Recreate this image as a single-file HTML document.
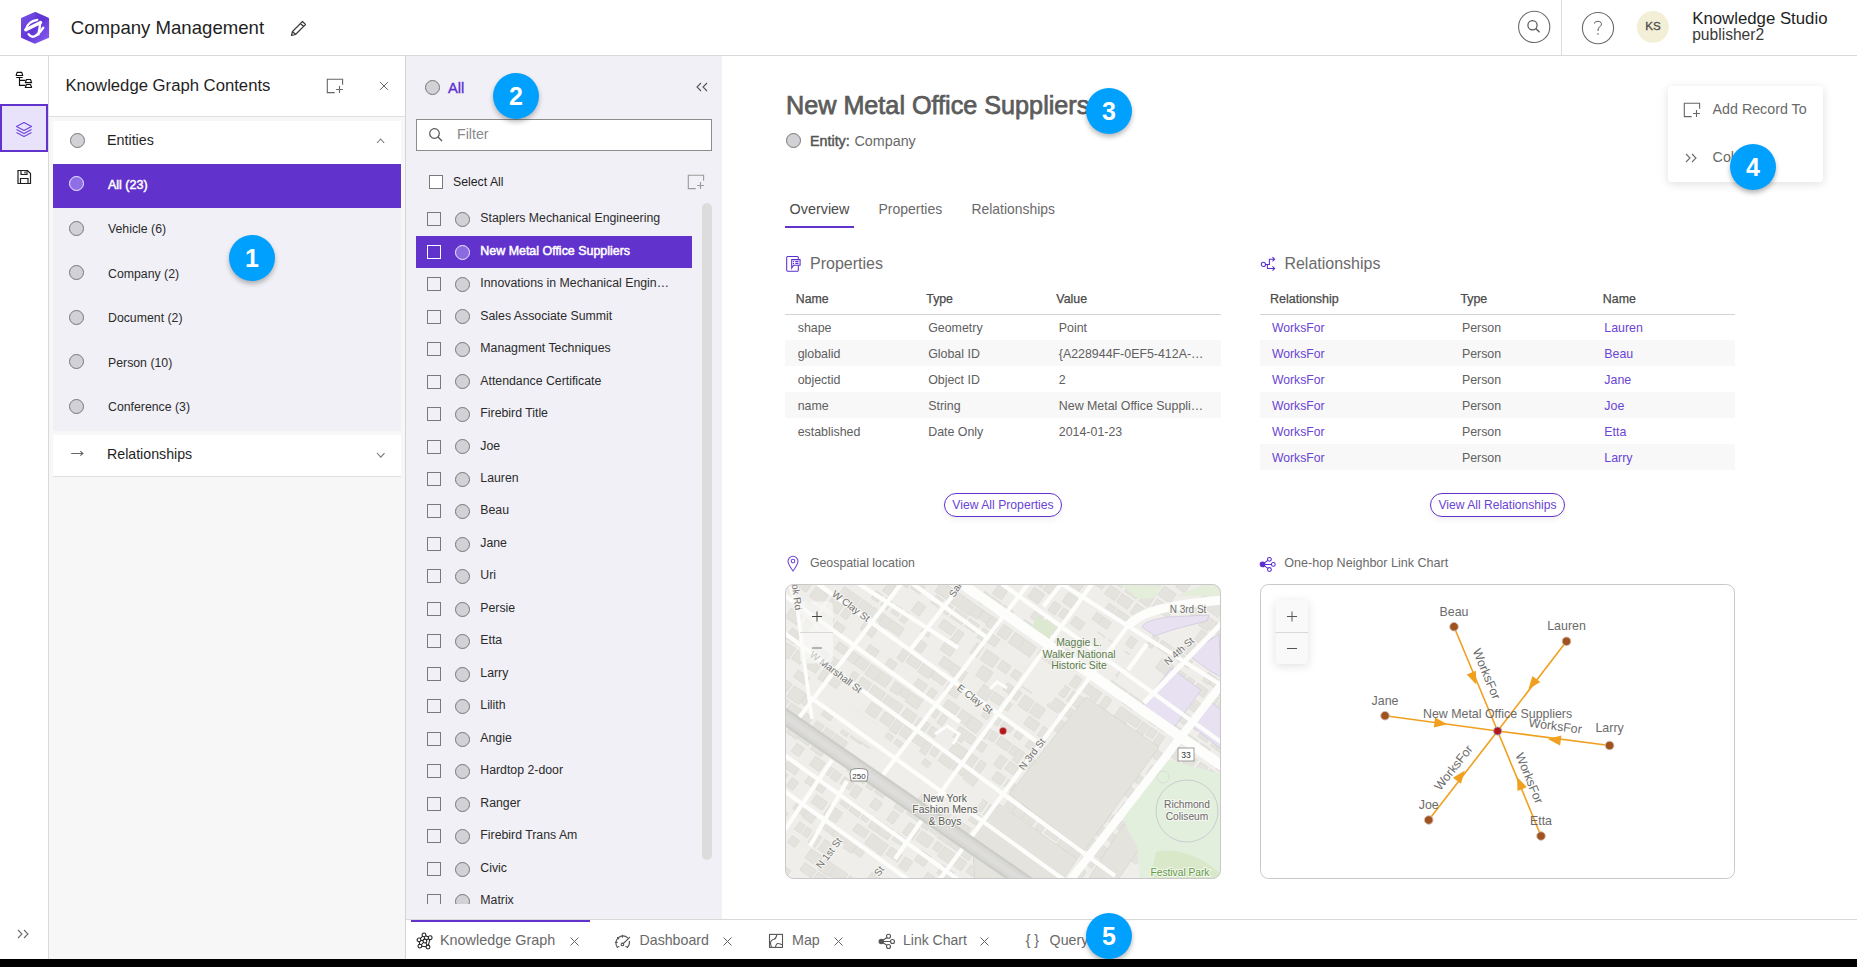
<!DOCTYPE html>
<html><head><meta charset="utf-8"><title>Knowledge Studio</title><style>*{margin:0;padding:0}
html,body{width:1857px;height:967px;overflow:hidden;background:#fff}
body{position:relative;font-family:"Liberation Sans",sans-serif}
.t{position:absolute;white-space:nowrap}
.b{position:absolute;display:block}
.badge{position:absolute;width:46px;height:46px;border-radius:50%;background:#00a0ff;color:#fff;font-weight:bold;font-size:25px;line-height:46px;text-align:center;box-shadow:0 3px 5px rgba(0,0,0,0.28)}
</style></head><body>
<div class="b" style="left:0px;top:0px;width:1857px;height:55px;background:#fff"></div>
<div class="b" style="left:0px;top:55px;width:1857px;height:1px;background:#d9d9d9"></div>
<svg class="b" style="left:20px;top:11px;" width="30" height="34" viewBox="0 0 30 34"><defs><linearGradient id="lg" x1="0" y1="0" x2="1" y2="1"><stop offset="0" stop-color="#7b55e6"/><stop offset="0.5" stop-color="#6236d6"/><stop offset="1" stop-color="#8c62f2"/></linearGradient></defs>
<path d="M14.8 1 Q15 0.8 15.5 1.1 L28.4 6.7 Q29.1 7 29.1 7.8 L29.1 26 Q29.1 26.8 28.4 27.1 L15.5 32.5 Q14.9 32.8 14.2 32.5 L1.7 27.1 Q1 26.8 1 26 L1 7.8 Q1 7 1.7 6.7 Z" fill="url(#lg)"/>
<path d="M15 1 L15 17 L29 7.5 L29 7 L15.5 1.1 Z" fill="#5a30cc" opacity="0.35"/>
<g stroke="#fff" fill="none" stroke-linecap="round"><path d="M5.8 18.6 Q7.5 10.5 17.3 8.8" stroke-width="2.2"/><path d="M5.8 18.8 L20.6 11.4" stroke-width="3.4"/><path d="M20.2 11.6 Q19.8 17 18.4 23.4" stroke-width="2.4"/><path d="M8.6 23.2 Q13.5 30.5 23.2 16.8" stroke-width="2.4"/></g></svg>
<div class="t " style="left:70.80px;top:19.45px;font-size:18.60px;line-height:18.60px;color:#1f1f1f;">Company Management</div>
<svg class="b" style="left:288px;top:19px;" width="20" height="19" viewBox="0 0 20 19"><path d="M3.5 16.5 L4.5 12.5 L14.5 2.5 L17.5 5.5 L7.5 15.5 Z M12.5 4.5 L15.5 7.5 M4.5 12.5 L7.5 15.5" stroke="#3a3a3a" stroke-width="1.2" fill="none" stroke-linejoin="round"/></svg>
<svg class="b" style="left:1517px;top:10px;" width="35" height="35" viewBox="0 0 35 35"><circle cx="17.2" cy="16.9" r="15.6" fill="none" stroke="#6b6b6b" stroke-width="1.1"/><circle cx="15.5" cy="15.2" r="4.6" fill="none" stroke="#555" stroke-width="1.2"/><path d="M18.8 18.5 L22.5 22.2" stroke="#555" stroke-width="1.3"/></svg>
<div class="b" style="left:1561px;top:0px;width:1px;height:55px;background:#dcdcdc"></div>
<svg class="b" style="left:1581px;top:11px;" width="35" height="35" viewBox="0 0 35 35"><circle cx="17" cy="17.1" r="15.6" fill="none" stroke="#6b6b6b" stroke-width="1.1"/></svg>
<svg class="b" style="left:1590px;top:18px;" width="16" height="20" viewBox="0 0 16 20"><path d="M4.5 5.5 C4.5 2.5 11.5 2.5 11.5 6 C11.5 8.5 8 9 8 12 V13" fill="none" stroke="#555" stroke-width="1"/><circle cx="8" cy="16" r="0.8" fill="#555"/></svg>
<svg class="b" style="left:1636px;top:10px;" width="34" height="34" viewBox="0 0 34 34"><circle cx="16.9" cy="16.9" r="15.9" fill="#f2efd6"/></svg>
<div class="t" style="left:1353.00px;width:600px;text-align:center;top:20.38px;font-size:11.60px;line-height:11.60px;color:#4a4a4a;-webkit-text-stroke:0.3px #4a4a4a;">KS</div>
<div class="t " style="left:1692.20px;top:11.28px;font-size:16.80px;line-height:16.80px;color:#1f1f1f;">Knowledge Studio</div>
<div class="t " style="left:1692.20px;top:26.69px;font-size:15.60px;line-height:15.60px;color:#3a3a3a;">publisher2</div>
<div class="b" style="left:0px;top:56px;width:48px;height:903px;background:#fff"></div>
<div class="b" style="left:48px;top:56px;width:1px;height:903px;background:#d9d9d9"></div>
<svg class="b" style="left:14px;top:70px;" width="20" height="20" viewBox="0 0 20 20"><g fill="none" stroke="#111" stroke-width="1.15" stroke-linejoin="round"><path d="M3.1 2.3 H7.8 L8.7 5.5 H2.2 Z"/><path d="M2.2 7.5 H8.7 M5.5 7.5 V15.4 H11.5 M5.5 10.4 H11.5"/><path d="M12.5 9.5 H16.5 L17.6 12.6 H11.3 Z"/><path d="M12.5 14.5 H16.5 L17.6 17.5 H11.3 Z"/></g></svg>
<div class="b" style="left:0px;top:104px;width:48px;height:48px;background:#e8e2fb;border:2px solid #6232cd;box-sizing:border-box"></div>
<svg class="b" style="left:14px;top:120.5px;" width="20" height="18" viewBox="0 0 20 18"><g fill="none" stroke="#6a44d6" stroke-width="1.1" stroke-linejoin="round"><path d="M10 1.5 L17.5 5.5 L10 9.5 L2.5 5.5 Z"/><path d="M2.5 8.5 L10 12.5 L17.5 8.5"/><path d="M2.5 11.5 L10 15.5 L17.5 11.5"/></g></svg>
<svg class="b" style="left:14.5px;top:167.5px;" width="18" height="18" viewBox="0 0 18 18"><g fill="none" stroke="#1e1e1e" stroke-width="1.2"><path d="M3 2.5 H12.5 L15.5 5.5 V15.5 H3 Z"/><path d="M6 2.5 V6.5 H12 V2.5 M10 3.5 V5.5"/><path d="M5.5 15.5 V10.5 H13 V15.5"/></g></svg>
<svg class="b" style="left:15px;top:927px;" width="16" height="14" viewBox="0 0 16 14"><path d="M3 3 L7 7 L3 11 M9 3 L13 7 L9 11" fill="none" stroke="#6b6b6b" stroke-width="1.1"/></svg>
<div class="b" style="left:49px;top:56px;width:356px;height:903px;background:#f7f7f7"></div>
<div class="b" style="left:49px;top:56px;width:356px;height:60px;background:#fff"></div>
<div class="b" style="left:49px;top:116px;width:356px;height:1px;background:#dedede"></div>
<div class="b" style="left:405px;top:56px;width:1px;height:903px;background:#d4d4d4"></div>
<div class="t " style="left:65.40px;top:78.36px;font-size:16.70px;line-height:16.70px;color:#1f1f1f;">Knowledge Graph Contents</div>
<svg class="b" style="left:325px;top:77px;" width="20" height="18" viewBox="0 0 20 18"><g fill="none" stroke="#666" stroke-width="1.1"><path d="M9.7 15.6 H2.3 V2.3 H17.6 V7.7"/><path d="M11.1 12.5 H17.9 M14.5 9.1 V15.9"/></g></svg>
<svg class="b" style="left:377px;top:80px;" width="13" height="13" viewBox="0 0 13 13"><path d="M3.1 2.1 L10.9 9.8 M10.9 2.1 L3.1 9.8" stroke="#666" stroke-width="1"/></svg>
<div class="b" style="left:53px;top:121px;width:348px;height:43px;background:#fff"></div>
<svg class="b" style="left:69.00px;top:131.80px" width="17" height="17"><circle cx="8.5" cy="8.5" r="7.0" fill="#d2d1d6" stroke="#777" stroke-width="1"/></svg>
<div class="t " style="left:107.00px;top:132.89px;font-size:14.30px;line-height:14.30px;color:#1f1f1f;">Entities</div>
<svg class="b" style="left:374.4px;top:136.4px;" width="14" height="10" viewBox="0 0 14 10"><path d="M3 7 L6.6 3 L10.2 7" fill="none" stroke="#777" stroke-width="1.1"/></svg>
<div class="b" style="left:53px;top:164px;width:348px;height:44px;background:#6232cd"></div>
<svg class="b" style="left:68.00px;top:174.80px" width="17" height="17"><circle cx="8.5" cy="8.5" r="7.0" fill="#8f6ee6" stroke="#f0ecff" stroke-width="1"/></svg>
<div class="t " style="left:108.00px;top:178.62px;font-size:12.50px;line-height:12.50px;color:#fff;-webkit-text-stroke:0.5px #fff;">All (23)</div>
<div class="b" style="left:53px;top:208px;width:348px;height:223px;background:#f1f0f6"></div>
<svg class="b" style="left:67.80px;top:220.00px" width="17" height="17"><circle cx="8.5" cy="8.5" r="7.0" fill="#d2d1d6" stroke="#777" stroke-width="1"/></svg>
<div class="t " style="left:108.00px;top:223.09px;font-size:12.30px;line-height:12.30px;color:#2b2b2b;">Vehicle (6)</div>
<svg class="b" style="left:67.80px;top:264.10px" width="17" height="17"><circle cx="8.5" cy="8.5" r="7.0" fill="#d2d1d6" stroke="#777" stroke-width="1"/></svg>
<div class="t " style="left:108.00px;top:268.09px;font-size:12.30px;line-height:12.30px;color:#2b2b2b;">Company (2)</div>
<svg class="b" style="left:67.80px;top:308.70px" width="17" height="17"><circle cx="8.5" cy="8.5" r="7.0" fill="#d2d1d6" stroke="#777" stroke-width="1"/></svg>
<div class="t " style="left:108.00px;top:312.09px;font-size:12.30px;line-height:12.30px;color:#2b2b2b;">Document (2)</div>
<svg class="b" style="left:67.80px;top:353.10px" width="17" height="17"><circle cx="8.5" cy="8.5" r="7.0" fill="#d2d1d6" stroke="#777" stroke-width="1"/></svg>
<div class="t " style="left:108.00px;top:357.09px;font-size:12.30px;line-height:12.30px;color:#2b2b2b;">Person (10)</div>
<svg class="b" style="left:67.80px;top:397.80px" width="17" height="17"><circle cx="8.5" cy="8.5" r="7.0" fill="#d2d1d6" stroke="#777" stroke-width="1"/></svg>
<div class="t " style="left:108.00px;top:401.09px;font-size:12.30px;line-height:12.30px;color:#2b2b2b;">Conference (3)</div>
<div class="b" style="left:53px;top:435px;width:348px;height:41px;background:#fff"></div>
<div class="b" style="left:53px;top:476px;width:348px;height:1px;background:#dedede"></div>
<svg class="b" style="left:68px;top:447px;" width="18" height="12" viewBox="0 0 18 12"><path d="M3.2 6.5 H15 M12.3 4.2 L15 6.5 L12.3 8.7" fill="none" stroke="#666" stroke-width="1.05"/></svg>
<div class="t " style="left:107.00px;top:446.98px;font-size:14.20px;line-height:14.20px;color:#1f1f1f;">Relationships</div>
<svg class="b" style="left:374.2px;top:450.2px;" width="14" height="10" viewBox="0 0 14 10"><path d="M3 3 L6.8 7.2 L10.5 3.2" fill="none" stroke="#777" stroke-width="1.1"/></svg>
<div class="b" style="left:406px;top:56px;width:316px;height:863px;background:#f1f0f6"></div>
<svg class="b" style="left:424.00px;top:79.00px" width="17" height="17"><circle cx="8.5" cy="8.5" r="7.0" fill="#d2d1d6" stroke="#777" stroke-width="1"/></svg>
<div class="t " style="left:448.00px;top:81.15px;font-size:14.70px;line-height:14.70px;color:#5a2fd0;-webkit-text-stroke:0.35px #5a2fd0;">All</div>
<svg class="b" style="left:693px;top:80px;" width="18" height="14" viewBox="0 0 18 14"><path d="M8 3 L4 7 L8 11 M14 3 L10 7 L14 11" fill="none" stroke="#555" stroke-width="1.1"/></svg>
<div class="b" style="left:416px;top:119px;width:296px;height:32px;background:#fff;border:1px solid #8c8c8c;box-sizing:border-box"></div>
<svg class="b" style="left:427px;top:126px;" width="18" height="18" viewBox="0 0 18 18"><circle cx="7.5" cy="7.5" r="4.8" fill="none" stroke="#555" stroke-width="1.2"/><path d="M11 11 L15 15" stroke="#555" stroke-width="1.3"/></svg>
<div class="t " style="left:457.00px;top:127.18px;font-size:14.20px;line-height:14.20px;color:#8a8a8a;">Filter</div>
<div class="b" style="left:429px;top:175px;width:14px;height:14px;background:#fff;border:1px solid #7a7a7a;box-sizing:border-box"></div>
<div class="t " style="left:453.00px;top:175.89px;font-size:12.30px;line-height:12.30px;color:#1f1f1f;">Select All</div>
<svg class="b" style="left:685.7px;top:173.2px;" width="20" height="18" viewBox="0 0 20 18"><g fill="none" stroke="#9a9a9a" stroke-width="1.1"><path d="M9.7 15.6 H2.3 V2.3 H17.6 V7.7"/><path d="M11.1 12.5 H17.9 M14.5 9.1 V15.9"/></g></svg>
<div class="b" style="left:702px;top:203px;width:10px;height:657px;background:#dcdcdc;border-radius:5px"></div>
<div class="b" style="left:0;top:0;width:1857px;height:904px;overflow:hidden"><div class="b" style="left:427px;top:212px;width:14px;height:14px;border:1px solid #7a7a7a;box-sizing:border-box"></div>
<svg class="b" style="left:453.50px;top:210.70px" width="17" height="17"><circle cx="8.5" cy="8.5" r="7.0" fill="#d2d1d6" stroke="#777" stroke-width="1"/></svg>
<div class="t " style="left:480.30px;top:212.19px;font-size:12.30px;line-height:12.30px;color:#2b2b2b;">Staplers Mechanical Engineering</div>
<div class="b" style="left:416px;top:236px;width:276px;height:32px;background:#6232cd"></div>
<div class="b" style="left:427px;top:245px;width:14px;height:14px;border:1.2px solid #fff;box-sizing:border-box;background:#6232cd"></div>
<svg class="b" style="left:453.50px;top:243.81px" width="17" height="17"><circle cx="8.5" cy="8.5" r="7.0" fill="#8c6ae0" stroke="#f0ecff" stroke-width="1"/></svg>
<div class="t " style="left:480.30px;top:245.23px;font-size:12.45px;line-height:12.45px;color:#fff;-webkit-text-stroke:0.5px #fff;">New Metal Office Suppliers</div>
<div class="b" style="left:427px;top:277px;width:14px;height:14px;border:1px solid #7a7a7a;box-sizing:border-box"></div>
<svg class="b" style="left:453.50px;top:275.72px" width="17" height="17"><circle cx="8.5" cy="8.5" r="7.0" fill="#d2d1d6" stroke="#777" stroke-width="1"/></svg>
<div class="t " style="left:480.30px;top:277.14px;font-size:12.30px;line-height:12.30px;color:#2b2b2b;">Innovations in Mechanical Engin…</div>
<div class="b" style="left:427px;top:310px;width:14px;height:14px;border:1px solid #7a7a7a;box-sizing:border-box"></div>
<svg class="b" style="left:453.50px;top:308.23px" width="17" height="17"><circle cx="8.5" cy="8.5" r="7.0" fill="#d2d1d6" stroke="#777" stroke-width="1"/></svg>
<div class="t " style="left:480.30px;top:309.61px;font-size:12.30px;line-height:12.30px;color:#2b2b2b;">Sales Associate Summit</div>
<div class="b" style="left:427px;top:342px;width:14px;height:14px;border:1px solid #7a7a7a;box-sizing:border-box"></div>
<svg class="b" style="left:453.50px;top:340.74px" width="17" height="17"><circle cx="8.5" cy="8.5" r="7.0" fill="#d2d1d6" stroke="#777" stroke-width="1"/></svg>
<div class="t " style="left:480.30px;top:342.09px;font-size:12.30px;line-height:12.30px;color:#2b2b2b;">Managment Techniques</div>
<div class="b" style="left:427px;top:375px;width:14px;height:14px;border:1px solid #7a7a7a;box-sizing:border-box"></div>
<svg class="b" style="left:453.50px;top:373.25px" width="17" height="17"><circle cx="8.5" cy="8.5" r="7.0" fill="#d2d1d6" stroke="#777" stroke-width="1"/></svg>
<div class="t " style="left:480.30px;top:374.57px;font-size:12.30px;line-height:12.30px;color:#2b2b2b;">Attendance Certificate</div>
<div class="b" style="left:427px;top:407px;width:14px;height:14px;border:1px solid #7a7a7a;box-sizing:border-box"></div>
<svg class="b" style="left:453.50px;top:405.76px" width="17" height="17"><circle cx="8.5" cy="8.5" r="7.0" fill="#d2d1d6" stroke="#777" stroke-width="1"/></svg>
<div class="t " style="left:480.30px;top:407.04px;font-size:12.30px;line-height:12.30px;color:#2b2b2b;">Firebird Title</div>
<div class="b" style="left:427px;top:440px;width:14px;height:14px;border:1px solid #7a7a7a;box-sizing:border-box"></div>
<svg class="b" style="left:453.50px;top:438.27px" width="17" height="17"><circle cx="8.5" cy="8.5" r="7.0" fill="#d2d1d6" stroke="#777" stroke-width="1"/></svg>
<div class="t " style="left:480.30px;top:439.52px;font-size:12.30px;line-height:12.30px;color:#2b2b2b;">Joe</div>
<div class="b" style="left:427px;top:472px;width:14px;height:14px;border:1px solid #7a7a7a;box-sizing:border-box"></div>
<svg class="b" style="left:453.50px;top:470.78px" width="17" height="17"><circle cx="8.5" cy="8.5" r="7.0" fill="#d2d1d6" stroke="#777" stroke-width="1"/></svg>
<div class="t " style="left:480.30px;top:471.99px;font-size:12.30px;line-height:12.30px;color:#2b2b2b;">Lauren</div>
<div class="b" style="left:427px;top:504px;width:14px;height:14px;border:1px solid #7a7a7a;box-sizing:border-box"></div>
<svg class="b" style="left:453.50px;top:503.29px" width="17" height="17"><circle cx="8.5" cy="8.5" r="7.0" fill="#d2d1d6" stroke="#777" stroke-width="1"/></svg>
<div class="t " style="left:480.30px;top:504.47px;font-size:12.30px;line-height:12.30px;color:#2b2b2b;">Beau</div>
<div class="b" style="left:427px;top:537px;width:14px;height:14px;border:1px solid #7a7a7a;box-sizing:border-box"></div>
<svg class="b" style="left:453.50px;top:535.80px" width="17" height="17"><circle cx="8.5" cy="8.5" r="7.0" fill="#d2d1d6" stroke="#777" stroke-width="1"/></svg>
<div class="t " style="left:480.30px;top:536.95px;font-size:12.30px;line-height:12.30px;color:#2b2b2b;">Jane</div>
<div class="b" style="left:427px;top:569px;width:14px;height:14px;border:1px solid #7a7a7a;box-sizing:border-box"></div>
<svg class="b" style="left:453.50px;top:568.31px" width="17" height="17"><circle cx="8.5" cy="8.5" r="7.0" fill="#d2d1d6" stroke="#777" stroke-width="1"/></svg>
<div class="t " style="left:480.30px;top:569.42px;font-size:12.30px;line-height:12.30px;color:#2b2b2b;">Uri</div>
<div class="b" style="left:427px;top:602px;width:14px;height:14px;border:1px solid #7a7a7a;box-sizing:border-box"></div>
<svg class="b" style="left:453.50px;top:600.82px" width="17" height="17"><circle cx="8.5" cy="8.5" r="7.0" fill="#d2d1d6" stroke="#777" stroke-width="1"/></svg>
<div class="t " style="left:480.30px;top:601.90px;font-size:12.30px;line-height:12.30px;color:#2b2b2b;">Persie</div>
<div class="b" style="left:427px;top:634px;width:14px;height:14px;border:1px solid #7a7a7a;box-sizing:border-box"></div>
<svg class="b" style="left:453.50px;top:633.33px" width="17" height="17"><circle cx="8.5" cy="8.5" r="7.0" fill="#d2d1d6" stroke="#777" stroke-width="1"/></svg>
<div class="t " style="left:480.30px;top:634.37px;font-size:12.30px;line-height:12.30px;color:#2b2b2b;">Etta</div>
<div class="b" style="left:427px;top:667px;width:14px;height:14px;border:1px solid #7a7a7a;box-sizing:border-box"></div>
<svg class="b" style="left:453.50px;top:665.84px" width="17" height="17"><circle cx="8.5" cy="8.5" r="7.0" fill="#d2d1d6" stroke="#777" stroke-width="1"/></svg>
<div class="t " style="left:480.30px;top:666.85px;font-size:12.30px;line-height:12.30px;color:#2b2b2b;">Larry</div>
<div class="b" style="left:427px;top:699px;width:14px;height:14px;border:1px solid #7a7a7a;box-sizing:border-box"></div>
<svg class="b" style="left:453.50px;top:698.35px" width="17" height="17"><circle cx="8.5" cy="8.5" r="7.0" fill="#d2d1d6" stroke="#777" stroke-width="1"/></svg>
<div class="t " style="left:480.30px;top:699.33px;font-size:12.30px;line-height:12.30px;color:#2b2b2b;">Lilith</div>
<div class="b" style="left:427px;top:732px;width:14px;height:14px;border:1px solid #7a7a7a;box-sizing:border-box"></div>
<svg class="b" style="left:453.50px;top:730.86px" width="17" height="17"><circle cx="8.5" cy="8.5" r="7.0" fill="#d2d1d6" stroke="#777" stroke-width="1"/></svg>
<div class="t " style="left:480.30px;top:731.80px;font-size:12.30px;line-height:12.30px;color:#2b2b2b;">Angie</div>
<div class="b" style="left:427px;top:764px;width:14px;height:14px;border:1px solid #7a7a7a;box-sizing:border-box"></div>
<svg class="b" style="left:453.50px;top:763.37px" width="17" height="17"><circle cx="8.5" cy="8.5" r="7.0" fill="#d2d1d6" stroke="#777" stroke-width="1"/></svg>
<div class="t " style="left:480.30px;top:764.28px;font-size:12.30px;line-height:12.30px;color:#2b2b2b;">Hardtop 2-door</div>
<div class="b" style="left:427px;top:797px;width:14px;height:14px;border:1px solid #7a7a7a;box-sizing:border-box"></div>
<svg class="b" style="left:453.50px;top:795.88px" width="17" height="17"><circle cx="8.5" cy="8.5" r="7.0" fill="#d2d1d6" stroke="#777" stroke-width="1"/></svg>
<div class="t " style="left:480.30px;top:796.75px;font-size:12.30px;line-height:12.30px;color:#2b2b2b;">Ranger</div>
<div class="b" style="left:427px;top:829px;width:14px;height:14px;border:1px solid #7a7a7a;box-sizing:border-box"></div>
<svg class="b" style="left:453.50px;top:828.39px" width="17" height="17"><circle cx="8.5" cy="8.5" r="7.0" fill="#d2d1d6" stroke="#777" stroke-width="1"/></svg>
<div class="t " style="left:480.30px;top:829.23px;font-size:12.30px;line-height:12.30px;color:#2b2b2b;">Firebird Trans Am</div>
<div class="b" style="left:427px;top:862px;width:14px;height:14px;border:1px solid #7a7a7a;box-sizing:border-box"></div>
<svg class="b" style="left:453.50px;top:860.90px" width="17" height="17"><circle cx="8.5" cy="8.5" r="7.0" fill="#d2d1d6" stroke="#777" stroke-width="1"/></svg>
<div class="t " style="left:480.30px;top:861.71px;font-size:12.30px;line-height:12.30px;color:#2b2b2b;">Civic</div>
<div class="b" style="left:427px;top:894px;width:14px;height:14px;border:1px solid #7a7a7a;box-sizing:border-box"></div>
<svg class="b" style="left:453.50px;top:893.41px" width="17" height="17"><circle cx="8.5" cy="8.5" r="7.0" fill="#d2d1d6" stroke="#777" stroke-width="1"/></svg>
<div class="t " style="left:480.30px;top:894.18px;font-size:12.30px;line-height:12.30px;color:#2b2b2b;">Matrix</div>
</div>
<div class="b" style="left:406px;top:919px;width:1451px;height:40px;background:#fff"></div>
<div class="b" style="left:406px;top:919px;width:1451px;height:1px;background:#d9d9d9"></div>
<div class="b" style="left:411px;top:920px;width:179px;height:2px;background:#6232cd"></div>
<div class="b" style="left:0px;top:959px;width:1857px;height:8px;background:#000"></div>
<svg class="b" style="left:416px;top:932px;" width="18" height="18" viewBox="0 0 18 18"><g fill="none" stroke="#1e1e1e" stroke-width="1.05"><path d="M8 2.9 L14.2 5.7 M8 2.9 L3 7.9 M3 7.9 L3.9 14.1 M3.9 14.1 L12 15 M12 15 L14.2 5.7 M8.9 9 L8 2.9 M8.9 9 L14.2 5.7 M8.9 9 L3 7.9 M8.9 9 L3.9 14.1 M8.9 9 L12 15"/><circle cx="8" cy="2.9" r="1.9" fill="#fff"/><circle cx="14.2" cy="5.7" r="1.9" fill="#fff"/><circle cx="3" cy="7.9" r="1.9" fill="#fff"/><circle cx="3.9" cy="14.1" r="1.9" fill="#fff"/><circle cx="12" cy="15" r="1.9" fill="#fff"/><circle cx="8.9" cy="9" r="1.9" fill="#fff"/></g></svg>
<div class="t " style="left:440.00px;top:933.01px;font-size:14.40px;line-height:14.40px;color:#6a6a6a;">Knowledge Graph</div>
<svg class="b" style="left:568px;top:935px;" width="13" height="13" viewBox="0 0 13 13"><path d="M2.5 2.5 L10.5 10.5 M10.5 2.5 L2.5 10.5" stroke="#666" stroke-width="1"/></svg>
<svg class="b" style="left:614px;top:932px;" width="18" height="18" viewBox="0 0 18 18"><g fill="none" stroke="#555" stroke-width="1.1" stroke-linecap="round"><path d="M3.4 15.4 A7.1 7.1 0 0 1 13.8 5.8"/><path d="M15.4 9.2 A7.1 7.1 0 0 1 13.4 15.4"/><path d="M8.4 3.4 V5.2 M1.4 10.4 H3.2 M3.5 5.5 L4.8 6.8 M9.3 11.5 L15.7 5.3 M3.4 15.4 L4.9 14.4 M13.4 15.4 L11.9 14.4"/><circle cx="8.4" cy="12.4" r="1.3"/></g></svg>
<div class="t " style="left:639.50px;top:933.18px;font-size:14.20px;line-height:14.20px;color:#6a6a6a;">Dashboard</div>
<svg class="b" style="left:721px;top:935px;" width="13" height="13" viewBox="0 0 13 13"><path d="M2.5 2.5 L10.5 10.5 M10.5 2.5 L2.5 10.5" stroke="#666" stroke-width="1"/></svg>
<svg class="b" style="left:767px;top:932px;" width="18" height="18" viewBox="0 0 18 18"><g fill="none" stroke="#555" stroke-width="1.1"><rect x="2.5" y="2.4" width="13" height="13"/><path d="M9.8 2.6 C 9.5 5 9 6.5 7 7.3 C 4.5 8 3.2 9.5 3.6 12 C 3.8 13.5 4.5 14.5 4.6 15.4 M8.5 15.4 C 8.8 13 9.5 11.6 11 11.5 C 12.5 11.4 13.5 12.4 15.5 12.6"/></g></svg>
<div class="t " style="left:792.00px;top:933.09px;font-size:14.30px;line-height:14.30px;color:#6a6a6a;">Map</div>
<svg class="b" style="left:832px;top:935px;" width="13" height="13" viewBox="0 0 13 13"><path d="M2.5 2.5 L10.5 10.5 M10.5 2.5 L2.5 10.5" stroke="#666" stroke-width="1"/></svg>
<svg class="b" style="left:877px;top:932px;" width="19" height="18" viewBox="0 0 19 18"><g fill="none" stroke="#555" stroke-width="1.1"><circle cx="4.3" cy="9.5" r="2.2" fill="#555"/><circle cx="11.5" cy="4.3" r="2"/><circle cx="15.5" cy="9.5" r="2"/><circle cx="11.5" cy="14.5" r="2"/><path d="M6.4 9.5 H13.5 M6 8.2 L9.9 5.5 M6 10.8 L9.9 13.3"/></g></svg>
<div class="t " style="left:903.00px;top:933.35px;font-size:14.00px;line-height:14.00px;color:#6a6a6a;">Link Chart</div>
<svg class="b" style="left:978px;top:935px;" width="13" height="13" viewBox="0 0 13 13"><path d="M2.5 2.5 L10.5 10.5 M10.5 2.5 L2.5 10.5" stroke="#666" stroke-width="1"/></svg>
<div class="t " style="left:1025.80px;top:933.35px;font-size:14.00px;line-height:14.00px;color:#666;">{ }</div>
<div class="t " style="left:1049.60px;top:933.18px;font-size:14.20px;line-height:14.20px;color:#6a6a6a;">Query</div>
<div class="t " style="left:786.00px;top:92.56px;font-size:25.20px;line-height:25.20px;color:#5c5c5c;-webkit-text-stroke:0.75px #5c5c5c;">New Metal Office Suppliers</div>
<svg class="b" style="left:784.90px;top:132.10px" width="17" height="17"><circle cx="8.5" cy="8.5" r="7.0" fill="#d2d1d6" stroke="#777" stroke-width="1"/></svg>
<div class="t " style="left:810.00px;top:134.39px;font-size:14.30px;line-height:14.30px;color:#555;-webkit-text-stroke:0.45px #555;">Entity:</div>
<div class="t " style="left:854.40px;top:134.35px;font-size:14.35px;line-height:14.35px;color:#6a6a6a;">Company</div>
<div class="t " style="left:789.50px;top:202.11px;font-size:14.40px;line-height:14.40px;color:#4a4a4a;">Overview</div>
<div class="t " style="left:878.40px;top:202.45px;font-size:14.00px;line-height:14.00px;color:#6a6a6a;">Properties</div>
<div class="t " style="left:971.50px;top:202.53px;font-size:13.90px;line-height:13.90px;color:#6a6a6a;">Relationships</div>
<div class="b" style="left:785px;top:226px;width:69px;height:2px;background:#6232cd"></div>
<svg class="b" style="left:785px;top:255px;" width="18" height="18" viewBox="0 0 18 18"><g fill="none" stroke="#5a2fd0" stroke-width="1.05"><rect x="1.7" y="1.5" width="11.6" height="14.7" rx="1"/><path d="M6.7 4.6 H15.1 V10.3 H8.6 L6.7 13.1 Z" fill="#fff"/><path d="M10.3 6.6 H13.5 M10.3 8.5 H13.5"/></g><circle cx="8.5" cy="6.6" r="0.65" fill="#5a2fd0"/><circle cx="8.5" cy="8.5" r="0.65" fill="#5a2fd0"/></svg>
<div class="t " style="left:810.00px;top:256.05px;font-size:16.00px;line-height:16.00px;color:#6a6a6a;">Properties</div>
<div class="t " style="left:795.80px;top:292.59px;font-size:12.30px;line-height:12.30px;color:#4a4a4a;-webkit-text-stroke:0.25px #4a4a4a;">Name</div>
<div class="t " style="left:926.30px;top:292.59px;font-size:12.30px;line-height:12.30px;color:#4a4a4a;-webkit-text-stroke:0.25px #4a4a4a;">Type</div>
<div class="t " style="left:1056.30px;top:292.50px;font-size:12.40px;line-height:12.40px;color:#4a4a4a;-webkit-text-stroke:0.25px #4a4a4a;">Value</div>
<div class="b" style="left:785px;top:314px;width:436px;height:1px;background:#d4d4d4"></div>
<div class="t " style="left:797.70px;top:321.50px;font-size:12.40px;line-height:12.40px;color:#606060;">shape</div>
<div class="t " style="left:928.20px;top:321.50px;font-size:12.40px;line-height:12.40px;color:#606060;">Geometry</div>
<div class="t " style="left:1058.80px;top:321.50px;font-size:12.40px;line-height:12.40px;color:#606060;">Point</div>
<div class="b" style="left:785px;top:340px;width:436px;height:26px;background:#f8f8f8"></div>
<div class="t " style="left:797.70px;top:347.50px;font-size:12.40px;line-height:12.40px;color:#606060;">globalid</div>
<div class="t " style="left:928.20px;top:347.50px;font-size:12.40px;line-height:12.40px;color:#606060;">Global ID</div>
<div class="t " style="left:1058.80px;top:347.50px;font-size:12.40px;line-height:12.40px;color:#606060;">{A228944F-0EF5-412A-…</div>
<div class="t " style="left:797.70px;top:373.50px;font-size:12.40px;line-height:12.40px;color:#606060;">objectid</div>
<div class="t " style="left:928.20px;top:373.50px;font-size:12.40px;line-height:12.40px;color:#606060;">Object ID</div>
<div class="t " style="left:1058.80px;top:373.50px;font-size:12.40px;line-height:12.40px;color:#606060;">2</div>
<div class="b" style="left:785px;top:392px;width:436px;height:26px;background:#f8f8f8"></div>
<div class="t " style="left:797.70px;top:399.50px;font-size:12.40px;line-height:12.40px;color:#606060;">name</div>
<div class="t " style="left:928.20px;top:399.50px;font-size:12.40px;line-height:12.40px;color:#606060;">String</div>
<div class="t " style="left:1058.80px;top:399.50px;font-size:12.40px;line-height:12.40px;color:#606060;">New Metal Office Suppli…</div>
<div class="t " style="left:797.70px;top:425.50px;font-size:12.40px;line-height:12.40px;color:#606060;">established</div>
<div class="t " style="left:928.20px;top:425.50px;font-size:12.40px;line-height:12.40px;color:#606060;">Date Only</div>
<div class="t " style="left:1058.80px;top:425.50px;font-size:12.40px;line-height:12.40px;color:#606060;">2014-01-23</div>
<div class="b" style="left:944px;top:493px;width:118px;height:24px;border:1.5px solid #6232cd;border-radius:12px;box-sizing:border-box;background:#fff;box-shadow:0 3px 6px rgba(0,0,0,0.06)"></div>
<div class="t" style="left:703.00px;width:600px;text-align:center;top:498.87px;font-size:12.20px;line-height:12.20px;color:#6a44d6;">View All Properties</div>
<svg class="b" style="left:1259px;top:255px;" width="18" height="18" viewBox="0 0 18 18"><g fill="none" stroke="#5a2fd0" stroke-width="1.05"><circle cx="4.4" cy="9.4" r="2.1"/><path d="M6.5 9.4 H10.4 V4.3 H15.6 M8.4 9.4 V13.5 H15.6 M13.5 2.2 L15.6 4.3 L13.5 6.4 M13.5 11.4 L15.6 13.5 L13.5 15.6"/></g></svg>
<div class="t " style="left:1284.40px;top:256.05px;font-size:16.00px;line-height:16.00px;color:#6a6a6a;">Relationships</div>
<div class="t " style="left:1270.00px;top:292.82px;font-size:12.50px;line-height:12.50px;color:#4a4a4a;-webkit-text-stroke:0.25px #4a4a4a;">Relationship</div>
<div class="t " style="left:1460.40px;top:292.50px;font-size:12.40px;line-height:12.40px;color:#4a4a4a;-webkit-text-stroke:0.25px #4a4a4a;">Type</div>
<div class="t " style="left:1602.80px;top:292.50px;font-size:12.40px;line-height:12.40px;color:#4a4a4a;-webkit-text-stroke:0.25px #4a4a4a;">Name</div>
<div class="b" style="left:1260px;top:314px;width:475px;height:1px;background:#d4d4d4"></div>
<div class="t " style="left:1272.00px;top:321.67px;font-size:12.20px;line-height:12.20px;color:#6a44d6;">WorksFor</div>
<div class="t " style="left:1461.90px;top:321.50px;font-size:12.40px;line-height:12.40px;color:#606060;">Person</div>
<div class="t " style="left:1604.30px;top:321.50px;font-size:12.40px;line-height:12.40px;color:#6a44d6;">Lauren</div>
<div class="b" style="left:1260px;top:340px;width:475px;height:26px;background:#f8f8f8"></div>
<div class="t " style="left:1272.00px;top:347.67px;font-size:12.20px;line-height:12.20px;color:#6a44d6;">WorksFor</div>
<div class="t " style="left:1461.90px;top:347.50px;font-size:12.40px;line-height:12.40px;color:#606060;">Person</div>
<div class="t " style="left:1604.30px;top:347.50px;font-size:12.40px;line-height:12.40px;color:#6a44d6;">Beau</div>
<div class="t " style="left:1272.00px;top:373.67px;font-size:12.20px;line-height:12.20px;color:#6a44d6;">WorksFor</div>
<div class="t " style="left:1461.90px;top:373.50px;font-size:12.40px;line-height:12.40px;color:#606060;">Person</div>
<div class="t " style="left:1604.30px;top:373.50px;font-size:12.40px;line-height:12.40px;color:#6a44d6;">Jane</div>
<div class="b" style="left:1260px;top:392px;width:475px;height:26px;background:#f8f8f8"></div>
<div class="t " style="left:1272.00px;top:399.67px;font-size:12.20px;line-height:12.20px;color:#6a44d6;">WorksFor</div>
<div class="t " style="left:1461.90px;top:399.50px;font-size:12.40px;line-height:12.40px;color:#606060;">Person</div>
<div class="t " style="left:1604.30px;top:399.50px;font-size:12.40px;line-height:12.40px;color:#6a44d6;">Joe</div>
<div class="t " style="left:1272.00px;top:425.67px;font-size:12.20px;line-height:12.20px;color:#6a44d6;">WorksFor</div>
<div class="t " style="left:1461.90px;top:425.50px;font-size:12.40px;line-height:12.40px;color:#606060;">Person</div>
<div class="t " style="left:1604.30px;top:425.50px;font-size:12.40px;line-height:12.40px;color:#6a44d6;">Etta</div>
<div class="b" style="left:1260px;top:444px;width:475px;height:26px;background:#f8f8f8"></div>
<div class="t " style="left:1272.00px;top:451.67px;font-size:12.20px;line-height:12.20px;color:#6a44d6;">WorksFor</div>
<div class="t " style="left:1461.90px;top:451.50px;font-size:12.40px;line-height:12.40px;color:#606060;">Person</div>
<div class="t " style="left:1604.30px;top:451.50px;font-size:12.40px;line-height:12.40px;color:#6a44d6;">Larry</div>
<div class="b" style="left:1430px;top:493px;width:135px;height:24px;border:1.5px solid #6232cd;border-radius:12px;box-sizing:border-box;background:#fff;box-shadow:0 3px 6px rgba(0,0,0,0.06)"></div>
<div class="t" style="left:1197.50px;width:600px;text-align:center;top:498.95px;font-size:12.10px;line-height:12.10px;color:#6a44d6;">View All Relationships</div>
<svg class="b" style="left:785px;top:554px;" width="16" height="19" viewBox="0 0 16 19"><path d="M8 17 C 4.5 12.2 3 9.8 3 7.3 A5 5 0 0 1 13 7.3 C 13 9.8 11.5 12.2 8 17 Z" fill="none" stroke="#6a44d6" stroke-width="1.05"/><circle cx="8" cy="7.1" r="1.8" fill="none" stroke="#6a44d6" stroke-width="1.05"/></svg>
<div class="t " style="left:809.90px;top:556.74px;font-size:12.35px;line-height:12.35px;color:#6a6a6a;">Geospatial location</div>
<svg class="b" style="left:1258px;top:554px;" width="20" height="19" viewBox="0 0 20 19"><g fill="none" stroke="#5a2fd0" stroke-width="1.05"><circle cx="4.5" cy="10.4" r="2.3" fill="#5a2fd0"/><circle cx="11.4" cy="5.3" r="1.9"/><circle cx="15.3" cy="10.4" r="1.9"/><circle cx="11.4" cy="15.5" r="1.9"/><path d="M6.5 10.4 H13.4 M6 9.2 L9.9 6.4 M6 11.6 L9.9 14.4"/></g></svg>
<div class="t " style="left:1284.30px;top:556.57px;font-size:12.56px;line-height:12.56px;color:#6a6a6a;">One-hop Neighbor Link Chart</div>
<svg class="b" style="left:785px;top:584px;font-family:"Liberation Sans",sans-serif" width="436" height="295" viewBox="0 0 436 295"><defs><clipPath id="mc"><rect x="0.5" y="0.5" width="435" height="294" rx="8"/></clipPath></defs><g clip-path="url(#mc)"><rect width="436" height="295" fill="#efeeea"/><g transform="rotate(35.0)" fill="#e4e3de" stroke="#d6d5cf" stroke-width="0.5"><rect x="344.6" y="-247.8" width="13.1" height="8.5"/><rect x="358.9" y="-247.8" width="13.6" height="9.5"/><rect x="377.5" y="-247.8" width="13.7" height="12.9"/><rect x="321.6" y="-231.6" width="10.8" height="9.7"/><rect x="348.6" y="-231.6" width="6.3" height="9.3"/><rect x="359.6" y="-231.6" width="14.0" height="10.7"/><rect x="377.6" y="-231.6" width="9.8" height="10.9"/><rect x="390.8" y="-231.6" width="10.3" height="12.6"/><rect x="283.2" y="-216.1" width="8.8" height="10.3"/><rect x="295.8" y="-216.1" width="12.5" height="8.8"/><rect x="311.8" y="-216.1" width="14.5" height="11.2"/><rect x="348.8" y="-216.1" width="9.2" height="8.5"/><rect x="362.5" y="-216.1" width="10.4" height="12.7"/><rect x="374.5" y="-216.1" width="6.5" height="10.0"/><rect x="382.6" y="-216.1" width="9.7" height="9.5"/><rect x="392.9" y="-216.1" width="14.7" height="8.9"/><rect x="410.0" y="-216.1" width="10.8" height="8.4"/><rect x="256.4" y="-201.4" width="8.9" height="8.1"/><rect x="267.5" y="-201.4" width="10.3" height="11.5"/><rect x="282.7" y="-201.4" width="13.3" height="12.6"/><rect x="299.6" y="-201.4" width="10.8" height="12.0"/><rect x="313.6" y="-201.4" width="12.1" height="10.6"/><rect x="326.5" y="-201.4" width="6.8" height="9.8"/><rect x="367.4" y="-201.4" width="14.6" height="12.5"/><rect x="386.2" y="-201.4" width="12.6" height="11.1"/><rect x="418.7" y="-201.4" width="9.5" height="8.0"/><rect x="232.2" y="-185.8" width="8.3" height="10.3"/><rect x="252.3" y="-185.8" width="10.2" height="8.4"/><rect x="267.3" y="-185.8" width="12.2" height="10.5"/><rect x="281.8" y="-185.8" width="13.0" height="10.2"/><rect x="299.3" y="-185.8" width="11.8" height="11.2"/><rect x="363.5" y="-185.8" width="14.7" height="13.0"/><rect x="380.6" y="-185.8" width="8.4" height="10.3"/><rect x="392.5" y="-185.8" width="7.1" height="8.8"/><rect x="213.0" y="-170.4" width="9.8" height="11.1"/><rect x="224.2" y="-170.4" width="7.2" height="10.5"/><rect x="233.9" y="-170.4" width="11.2" height="12.6"/><rect x="276.5" y="-170.4" width="8.6" height="8.5"/><rect x="287.2" y="-170.4" width="14.0" height="9.3"/><rect x="331.3" y="-170.4" width="6.4" height="12.9"/><rect x="341.1" y="-170.4" width="12.5" height="9.3"/><rect x="355.6" y="-170.4" width="6.9" height="8.3"/><rect x="364.8" y="-170.4" width="13.8" height="8.3"/><rect x="397.2" y="-170.4" width="6.9" height="10.1"/><rect x="404.7" y="-170.4" width="11.1" height="9.4"/><rect x="418.6" y="-170.4" width="14.4" height="12.7"/><rect x="434.0" y="-170.4" width="12.9" height="8.6"/><rect x="197.0" y="-155.7" width="8.3" height="12.2"/><rect x="206.1" y="-155.7" width="6.1" height="11.8"/><rect x="214.8" y="-155.7" width="9.9" height="12.0"/><rect x="237.1" y="-155.7" width="13.5" height="11.1"/><rect x="271.5" y="-155.7" width="7.8" height="8.3"/><rect x="280.2" y="-155.7" width="9.3" height="8.4"/><rect x="313.3" y="-155.7" width="8.0" height="10.0"/><rect x="351.6" y="-155.7" width="14.3" height="12.0"/><rect x="369.3" y="-155.7" width="11.9" height="12.4"/><rect x="383.7" y="-155.7" width="7.7" height="9.6"/><rect x="395.0" y="-155.7" width="12.9" height="9.0"/><rect x="412.2" y="-155.7" width="9.3" height="8.5"/><rect x="423.6" y="-155.7" width="7.3" height="9.4"/><rect x="432.1" y="-155.7" width="9.8" height="8.5"/><rect x="444.9" y="-155.7" width="14.6" height="12.2"/><rect x="168.1" y="-140.3" width="8.9" height="11.1"/><rect x="206.1" y="-140.3" width="12.7" height="11.6"/><rect x="230.5" y="-140.3" width="8.3" height="11.1"/><rect x="242.0" y="-140.3" width="10.1" height="9.4"/><rect x="256.3" y="-140.3" width="11.9" height="9.2"/><rect x="283.8" y="-140.3" width="9.0" height="11.1"/><rect x="297.5" y="-140.3" width="6.4" height="10.5"/><rect x="317.2" y="-140.3" width="8.0" height="10.3"/><rect x="326.3" y="-140.3" width="7.7" height="12.9"/><rect x="362.0" y="-140.3" width="7.5" height="9.3"/><rect x="370.8" y="-140.3" width="12.5" height="10.5"/><rect x="402.6" y="-140.3" width="14.2" height="10.8"/><rect x="419.9" y="-140.3" width="8.5" height="8.2"/><rect x="431.0" y="-140.3" width="7.1" height="8.4"/><rect x="458.7" y="-140.3" width="11.3" height="9.6"/><rect x="148.1" y="-124.3" width="8.0" height="10.5"/><rect x="175.3" y="-124.3" width="11.1" height="13.0"/><rect x="220.1" y="-124.3" width="10.4" height="11.1"/><rect x="235.3" y="-124.3" width="13.2" height="12.1"/><rect x="267.2" y="-124.3" width="12.9" height="10.7"/><rect x="300.0" y="-124.3" width="10.4" height="11.3"/><rect x="311.2" y="-124.3" width="14.6" height="9.6"/><rect x="326.5" y="-124.3" width="7.7" height="12.6"/><rect x="336.0" y="-124.3" width="13.3" height="9.2"/><rect x="352.4" y="-124.3" width="14.1" height="10.4"/><rect x="368.1" y="-124.3" width="9.3" height="8.0"/><rect x="389.5" y="-124.3" width="8.2" height="9.5"/><rect x="400.4" y="-124.3" width="7.1" height="10.6"/><rect x="408.6" y="-124.3" width="13.1" height="8.5"/><rect x="425.6" y="-124.3" width="10.9" height="12.4"/><rect x="441.3" y="-124.3" width="6.4" height="12.5"/><rect x="448.2" y="-124.3" width="8.3" height="12.9"/><rect x="460.3" y="-124.3" width="13.3" height="8.0"/><rect x="124.9" y="-108.5" width="9.1" height="9.7"/><rect x="135.6" y="-108.5" width="10.6" height="9.9"/><rect x="167.8" y="-108.5" width="6.3" height="12.4"/><rect x="175.5" y="-108.5" width="12.7" height="11.8"/><rect x="190.8" y="-108.5" width="12.5" height="10.1"/><rect x="216.5" y="-108.5" width="9.1" height="10.1"/><rect x="244.8" y="-108.5" width="6.4" height="10.3"/><rect x="254.6" y="-108.5" width="9.2" height="9.5"/><rect x="267.0" y="-108.5" width="10.5" height="10.4"/><rect x="314.7" y="-108.5" width="7.7" height="10.1"/><rect x="323.1" y="-108.5" width="12.2" height="9.6"/><rect x="335.9" y="-108.5" width="6.2" height="11.4"/><rect x="344.5" y="-108.5" width="12.1" height="12.5"/><rect x="358.1" y="-108.5" width="14.9" height="8.9"/><rect x="376.4" y="-108.5" width="8.6" height="12.4"/><rect x="388.7" y="-108.5" width="7.2" height="12.2"/><rect x="399.2" y="-108.5" width="12.6" height="9.6"/><rect x="413.8" y="-108.5" width="14.8" height="11.3"/><rect x="431.7" y="-108.5" width="11.9" height="9.3"/><rect x="459.1" y="-108.5" width="13.7" height="12.9"/><rect x="127.2" y="-92.4" width="14.1" height="12.4"/><rect x="143.0" y="-92.4" width="12.6" height="12.5"/><rect x="157.1" y="-92.4" width="11.5" height="12.8"/><rect x="169.7" y="-92.4" width="7.8" height="11.2"/><rect x="178.0" y="-92.4" width="9.4" height="9.3"/><rect x="188.2" y="-92.4" width="11.0" height="11.4"/><rect x="202.4" y="-92.4" width="10.7" height="11.9"/><rect x="216.5" y="-92.4" width="11.1" height="12.1"/><rect x="228.6" y="-92.4" width="13.8" height="12.2"/><rect x="246.9" y="-92.4" width="11.5" height="12.3"/><rect x="260.6" y="-92.4" width="7.0" height="11.8"/><rect x="290.4" y="-92.4" width="7.8" height="11.6"/><rect x="300.8" y="-92.4" width="12.2" height="9.4"/><rect x="314.4" y="-92.4" width="8.0" height="10.7"/><rect x="326.9" y="-92.4" width="7.3" height="12.6"/><rect x="345.4" y="-92.4" width="13.5" height="12.9"/><rect x="360.2" y="-92.4" width="9.9" height="8.8"/><rect x="372.1" y="-92.4" width="7.5" height="11.4"/><rect x="381.4" y="-92.4" width="8.3" height="8.7"/><rect x="392.2" y="-92.4" width="6.7" height="10.6"/><rect x="415.9" y="-92.4" width="8.0" height="12.6"/><rect x="428.4" y="-92.4" width="10.2" height="10.7"/><rect x="442.5" y="-92.4" width="9.3" height="12.4"/><rect x="454.3" y="-92.4" width="6.3" height="9.3"/><rect x="462.7" y="-92.4" width="11.2" height="8.0"/><rect x="478.5" y="-92.4" width="14.6" height="11.4"/><rect x="496.2" y="-92.4" width="15.0" height="12.0"/><rect x="88.1" y="-77.8" width="14.1" height="11.0"/><rect x="105.2" y="-77.8" width="11.0" height="8.9"/><rect x="130.1" y="-77.8" width="9.0" height="9.2"/><rect x="142.1" y="-77.8" width="8.7" height="10.4"/><rect x="154.1" y="-77.8" width="13.9" height="9.9"/><rect x="171.0" y="-77.8" width="12.0" height="9.2"/><rect x="187.7" y="-77.8" width="7.3" height="11.4"/><rect x="197.7" y="-77.8" width="10.1" height="9.2"/><rect x="245.8" y="-77.8" width="14.1" height="11.3"/><rect x="262.3" y="-77.8" width="12.3" height="8.8"/><rect x="279.6" y="-77.8" width="14.3" height="11.3"/><rect x="297.6" y="-77.8" width="14.9" height="11.9"/><rect x="315.0" y="-77.8" width="11.7" height="12.6"/><rect x="327.5" y="-77.8" width="7.3" height="12.8"/><rect x="339.5" y="-77.8" width="7.3" height="8.5"/><rect x="363.5" y="-77.8" width="12.5" height="10.1"/><rect x="378.3" y="-77.8" width="10.2" height="9.6"/><rect x="393.3" y="-77.8" width="13.2" height="8.7"/><rect x="420.6" y="-77.8" width="11.6" height="9.9"/><rect x="450.6" y="-77.8" width="13.2" height="10.0"/><rect x="481.8" y="-77.8" width="12.1" height="12.9"/><rect x="496.8" y="-77.8" width="10.9" height="9.4"/><rect x="62.4" y="-62.2" width="11.8" height="10.6"/><rect x="83.9" y="-62.2" width="7.8" height="11.9"/><rect x="118.8" y="-62.2" width="9.5" height="11.7"/><rect x="150.2" y="-62.2" width="15.0" height="9.2"/><rect x="167.7" y="-62.2" width="7.5" height="12.6"/><rect x="191.0" y="-62.2" width="8.0" height="12.3"/><rect x="203.0" y="-62.2" width="15.0" height="11.9"/><rect x="221.9" y="-62.2" width="10.8" height="9.1"/><rect x="237.3" y="-62.2" width="10.7" height="8.2"/><rect x="253.0" y="-62.2" width="11.6" height="10.5"/><rect x="284.0" y="-62.2" width="13.0" height="11.6"/><rect x="298.5" y="-62.2" width="10.4" height="9.3"/><rect x="324.1" y="-62.2" width="6.2" height="8.9"/><rect x="334.0" y="-62.2" width="9.2" height="11.0"/><rect x="346.6" y="-62.2" width="13.0" height="11.9"/><rect x="362.7" y="-62.2" width="6.0" height="9.3"/><rect x="369.6" y="-62.2" width="6.7" height="12.8"/><rect x="379.3" y="-62.2" width="12.2" height="12.3"/><rect x="404.6" y="-62.2" width="13.4" height="11.2"/><rect x="421.6" y="-62.2" width="8.5" height="11.7"/><rect x="443.6" y="-62.2" width="8.6" height="11.6"/><rect x="455.2" y="-62.2" width="9.1" height="10.4"/><rect x="465.2" y="-62.2" width="9.9" height="9.2"/><rect x="484.9" y="-62.2" width="14.0" height="10.1"/><rect x="501.4" y="-62.2" width="10.6" height="8.3"/><rect x="36.0" y="-46.8" width="11.7" height="9.0"/><rect x="50.5" y="-46.8" width="6.1" height="8.6"/><rect x="78.7" y="-46.8" width="7.8" height="8.8"/><rect x="90.6" y="-46.8" width="7.7" height="9.6"/><rect x="102.9" y="-46.8" width="7.9" height="9.2"/><rect x="114.4" y="-46.8" width="6.3" height="10.9"/><rect x="138.8" y="-46.8" width="9.0" height="8.2"/><rect x="164.3" y="-46.8" width="12.6" height="11.5"/><rect x="208.5" y="-46.8" width="12.7" height="12.2"/><rect x="239.1" y="-46.8" width="6.3" height="8.2"/><rect x="246.3" y="-46.8" width="9.9" height="9.7"/><rect x="260.2" y="-46.8" width="11.2" height="12.6"/><rect x="273.7" y="-46.8" width="11.6" height="11.9"/><rect x="299.5" y="-46.8" width="13.6" height="12.2"/><rect x="315.8" y="-46.8" width="13.5" height="11.6"/><rect x="330.7" y="-46.8" width="12.6" height="9.5"/><rect x="360.2" y="-46.8" width="10.4" height="12.4"/><rect x="373.7" y="-46.8" width="14.9" height="9.7"/><rect x="389.6" y="-46.8" width="6.2" height="11.7"/><rect x="400.1" y="-46.8" width="13.5" height="8.1"/><rect x="415.3" y="-46.8" width="8.4" height="8.1"/><rect x="436.7" y="-46.8" width="7.2" height="12.5"/><rect x="458.7" y="-46.8" width="6.8" height="9.9"/><rect x="468.6" y="-46.8" width="8.5" height="10.0"/><rect x="479.4" y="-46.8" width="13.4" height="9.9"/><rect x="494.1" y="-46.8" width="12.4" height="10.1"/><rect x="510.5" y="-46.8" width="8.7" height="8.4"/><rect x="50.2" y="-31.9" width="8.2" height="10.5"/><rect x="59.6" y="-31.9" width="10.9" height="10.7"/><rect x="72.5" y="-31.9" width="11.5" height="9.0"/><rect x="85.6" y="-31.9" width="13.1" height="9.0"/><rect x="99.5" y="-31.9" width="8.7" height="10.7"/><rect x="109.3" y="-31.9" width="14.0" height="9.6"/><rect x="142.1" y="-31.9" width="9.0" height="10.5"/><rect x="171.7" y="-31.9" width="13.2" height="9.5"/><rect x="186.1" y="-31.9" width="14.4" height="10.6"/><rect x="220.4" y="-31.9" width="11.6" height="12.4"/><rect x="233.8" y="-31.9" width="11.1" height="9.0"/><rect x="247.5" y="-31.9" width="7.8" height="8.6"/><rect x="275.7" y="-31.9" width="13.2" height="9.7"/><rect x="293.5" y="-31.9" width="8.3" height="11.1"/><rect x="333.7" y="-31.9" width="13.3" height="10.2"/><rect x="363.6" y="-31.9" width="8.0" height="10.7"/><rect x="389.5" y="-31.9" width="7.3" height="12.8"/><rect x="397.8" y="-31.9" width="6.3" height="9.8"/><rect x="405.3" y="-31.9" width="14.5" height="9.3"/><rect x="421.2" y="-31.9" width="6.1" height="8.0"/><rect x="432.1" y="-31.9" width="10.1" height="9.2"/><rect x="445.6" y="-31.9" width="8.8" height="8.9"/><rect x="458.2" y="-31.9" width="9.1" height="10.8"/><rect x="493.1" y="-31.9" width="12.4" height="10.2"/><rect x="509.2" y="-31.9" width="7.6" height="9.7"/><rect x="9.0" y="-15.7" width="13.1" height="10.6"/><rect x="27.0" y="-15.7" width="14.9" height="12.0"/><rect x="46.4" y="-15.7" width="13.9" height="10.5"/><rect x="63.6" y="-15.7" width="7.2" height="9.7"/><rect x="87.2" y="-15.7" width="14.6" height="9.6"/><rect x="134.1" y="-15.7" width="7.1" height="12.4"/><rect x="143.6" y="-15.7" width="13.1" height="10.2"/><rect x="158.9" y="-15.7" width="12.8" height="11.2"/><rect x="172.3" y="-15.7" width="15.0" height="8.4"/><rect x="191.3" y="-15.7" width="14.4" height="11.4"/><rect x="236.4" y="-15.7" width="6.9" height="11.1"/><rect x="247.7" y="-15.7" width="7.7" height="10.3"/><rect x="258.1" y="-15.7" width="11.5" height="9.0"/><rect x="274.5" y="-15.7" width="7.3" height="9.1"/><rect x="289.6" y="-15.7" width="13.5" height="10.9"/><rect x="307.6" y="-15.7" width="7.0" height="11.2"/><rect x="318.3" y="-15.7" width="8.1" height="8.7"/><rect x="328.3" y="-15.7" width="11.4" height="11.7"/><rect x="343.5" y="-15.7" width="14.8" height="10.0"/><rect x="360.3" y="-15.7" width="13.9" height="9.1"/><rect x="376.9" y="-15.7" width="10.0" height="10.9"/><rect x="403.1" y="-15.7" width="14.3" height="12.2"/><rect x="448.6" y="-15.7" width="14.3" height="10.3"/><rect x="463.6" y="-15.7" width="14.6" height="8.4"/><rect x="481.3" y="-15.7" width="7.6" height="9.8"/><rect x="489.4" y="-15.7" width="9.6" height="9.9"/><rect x="502.7" y="-15.7" width="14.5" height="12.4"/><rect x="520.5" y="-15.7" width="12.2" height="11.9"/><rect x="-12.8" y="0.9" width="12.7" height="8.8"/><rect x="28.9" y="0.9" width="13.5" height="11.1"/><rect x="47.1" y="0.9" width="13.8" height="11.7"/><rect x="63.8" y="0.9" width="10.7" height="8.1"/><rect x="104.2" y="0.9" width="11.5" height="10.3"/><rect x="128.3" y="0.9" width="9.4" height="11.0"/><rect x="163.1" y="0.9" width="11.8" height="11.0"/><rect x="179.4" y="0.9" width="7.4" height="12.3"/><rect x="199.5" y="0.9" width="14.7" height="8.9"/><rect x="217.3" y="0.9" width="11.3" height="11.5"/><rect x="229.5" y="0.9" width="13.0" height="12.0"/><rect x="246.7" y="0.9" width="6.1" height="11.4"/><rect x="254.6" y="0.9" width="6.8" height="9.3"/><rect x="264.3" y="0.9" width="13.3" height="8.9"/><rect x="279.5" y="0.9" width="6.4" height="8.9"/><rect x="287.1" y="0.9" width="6.3" height="12.9"/><rect x="297.4" y="0.9" width="9.8" height="10.6"/><rect x="324.2" y="0.9" width="6.9" height="12.9"/><rect x="350.2" y="0.9" width="14.6" height="8.7"/><rect x="390.8" y="0.9" width="8.5" height="12.2"/><rect x="401.4" y="0.9" width="8.2" height="8.5"/><rect x="412.0" y="0.9" width="7.1" height="9.0"/><rect x="465.0" y="0.9" width="9.0" height="11.0"/><rect x="478.6" y="0.9" width="8.4" height="13.0"/><rect x="489.1" y="0.9" width="12.7" height="10.9"/><rect x="502.8" y="0.9" width="13.9" height="9.0"/><rect x="521.0" y="0.9" width="10.4" height="10.4"/><rect x="536.1" y="0.9" width="11.4" height="11.3"/><rect x="551.2" y="0.9" width="9.4" height="8.9"/><rect x="19.0" y="16.2" width="14.2" height="10.7"/><rect x="38.2" y="16.2" width="7.8" height="11.4"/><rect x="77.5" y="16.2" width="11.7" height="8.1"/><rect x="92.1" y="16.2" width="10.3" height="10.1"/><rect x="102.9" y="16.2" width="11.8" height="9.8"/><rect x="116.9" y="16.2" width="12.0" height="11.7"/><rect x="130.0" y="16.2" width="11.6" height="11.0"/><rect x="146.5" y="16.2" width="9.3" height="10.6"/><rect x="156.8" y="16.2" width="7.7" height="8.9"/><rect x="165.6" y="16.2" width="14.3" height="10.9"/><rect x="193.9" y="16.2" width="6.2" height="8.0"/><rect x="203.8" y="16.2" width="6.3" height="10.2"/><rect x="224.8" y="16.2" width="10.8" height="12.8"/><rect x="237.2" y="16.2" width="7.3" height="8.7"/><rect x="246.7" y="16.2" width="11.5" height="9.0"/><rect x="274.5" y="16.2" width="8.3" height="12.1"/><rect x="286.0" y="16.2" width="10.8" height="9.2"/><rect x="322.5" y="16.2" width="8.3" height="10.5"/><rect x="343.5" y="16.2" width="7.2" height="9.6"/><rect x="367.8" y="16.2" width="7.6" height="8.8"/><rect x="378.3" y="16.2" width="11.7" height="11.6"/><rect x="394.4" y="16.2" width="14.1" height="10.4"/><rect x="409.8" y="16.2" width="12.5" height="8.3"/><rect x="426.0" y="16.2" width="6.2" height="8.7"/><rect x="434.7" y="16.2" width="13.7" height="12.0"/><rect x="448.9" y="16.2" width="10.9" height="9.0"/><rect x="464.4" y="16.2" width="8.6" height="10.0"/><rect x="477.7" y="16.2" width="6.6" height="10.9"/><rect x="485.3" y="16.2" width="6.9" height="9.7"/><rect x="495.9" y="16.2" width="14.7" height="11.3"/><rect x="515.6" y="16.2" width="14.4" height="10.2"/><rect x="532.8" y="16.2" width="6.9" height="11.2"/><rect x="2.9" y="31.9" width="10.6" height="12.2"/><rect x="30.9" y="31.9" width="11.0" height="11.9"/><rect x="59.6" y="31.9" width="6.4" height="11.5"/><rect x="69.1" y="31.9" width="8.0" height="10.1"/><rect x="80.7" y="31.9" width="11.7" height="9.8"/><rect x="106.3" y="31.9" width="6.2" height="8.4"/><rect x="116.6" y="31.9" width="11.7" height="12.9"/><rect x="130.7" y="31.9" width="14.6" height="9.2"/><rect x="147.6" y="31.9" width="6.3" height="10.8"/><rect x="155.2" y="31.9" width="11.5" height="10.3"/><rect x="170.7" y="31.9" width="13.2" height="11.4"/><rect x="187.0" y="31.9" width="12.0" height="9.0"/><rect x="201.9" y="31.9" width="8.4" height="8.4"/><rect x="230.1" y="31.9" width="14.8" height="10.6"/><rect x="245.6" y="31.9" width="12.5" height="12.2"/><rect x="261.4" y="31.9" width="6.9" height="12.7"/><rect x="281.1" y="31.9" width="10.7" height="9.4"/><rect x="295.1" y="31.9" width="13.6" height="8.1"/><rect x="313.6" y="31.9" width="6.2" height="11.1"/><rect x="320.9" y="31.9" width="8.7" height="12.8"/><rect x="332.2" y="31.9" width="13.8" height="8.5"/><rect x="395.6" y="31.9" width="11.5" height="12.7"/><rect x="408.9" y="31.9" width="14.7" height="13.0"/><rect x="428.0" y="31.9" width="12.8" height="9.1"/><rect x="475.0" y="31.9" width="7.0" height="12.2"/><rect x="485.8" y="31.9" width="14.9" height="10.4"/><rect x="505.2" y="31.9" width="11.7" height="12.9"/><rect x="11.8" y="47.0" width="8.8" height="8.8"/><rect x="22.8" y="47.0" width="10.7" height="10.3"/><rect x="35.2" y="47.0" width="10.5" height="12.8"/><rect x="48.1" y="47.0" width="10.2" height="10.3"/><rect x="61.6" y="47.0" width="14.4" height="8.8"/><rect x="80.9" y="47.0" width="6.0" height="11.5"/><rect x="89.7" y="47.0" width="12.5" height="9.3"/><rect x="138.8" y="47.0" width="12.2" height="11.6"/><rect x="155.5" y="47.0" width="11.5" height="10.5"/><rect x="169.0" y="47.0" width="8.2" height="12.6"/><rect x="179.3" y="47.0" width="11.3" height="10.5"/><rect x="192.3" y="47.0" width="12.9" height="8.7"/><rect x="206.2" y="47.0" width="6.7" height="12.9"/><rect x="215.5" y="47.0" width="6.7" height="8.8"/><rect x="226.8" y="47.0" width="14.4" height="10.0"/><rect x="242.8" y="47.0" width="13.5" height="8.7"/><rect x="257.7" y="47.0" width="12.7" height="12.3"/><rect x="307.0" y="47.0" width="8.8" height="9.0"/><rect x="316.6" y="47.0" width="11.2" height="9.5"/><rect x="328.8" y="47.0" width="12.2" height="9.3"/><rect x="344.8" y="47.0" width="7.5" height="9.6"/><rect x="355.9" y="47.0" width="14.0" height="8.1"/><rect x="372.0" y="47.0" width="14.0" height="10.5"/><rect x="387.1" y="47.0" width="10.0" height="9.7"/><rect x="400.5" y="47.0" width="14.0" height="10.0"/><rect x="448.1" y="47.0" width="13.4" height="8.8"/><rect x="466.5" y="47.0" width="9.1" height="11.0"/><rect x="488.9" y="47.0" width="9.2" height="11.5"/><rect x="60.1" y="62.8" width="14.4" height="8.4"/><rect x="128.2" y="62.8" width="6.3" height="10.2"/><rect x="137.3" y="62.8" width="6.1" height="10.2"/><rect x="145.4" y="62.8" width="11.5" height="11.7"/><rect x="169.5" y="62.8" width="7.1" height="11.5"/><rect x="180.6" y="62.8" width="11.0" height="8.5"/><rect x="214.7" y="62.8" width="13.1" height="12.4"/><rect x="245.1" y="62.8" width="14.6" height="11.4"/><rect x="277.4" y="62.8" width="13.9" height="11.7"/><rect x="294.5" y="62.8" width="10.4" height="12.4"/><rect x="307.2" y="62.8" width="12.5" height="11.9"/><rect x="321.8" y="62.8" width="12.0" height="10.9"/><rect x="335.6" y="62.8" width="7.3" height="10.6"/><rect x="346.8" y="62.8" width="11.3" height="8.7"/><rect x="362.2" y="62.8" width="6.3" height="11.7"/><rect x="403.8" y="62.8" width="8.1" height="9.9"/><rect x="429.3" y="62.8" width="11.5" height="12.0"/><rect x="442.0" y="62.8" width="8.6" height="9.6"/><rect x="466.7" y="62.8" width="14.2" height="10.2"/><rect x="33.4" y="78.1" width="14.9" height="11.9"/><rect x="49.8" y="78.1" width="13.6" height="9.0"/><rect x="66.0" y="78.1" width="14.3" height="13.0"/><rect x="81.0" y="78.1" width="10.2" height="10.2"/><rect x="104.7" y="78.1" width="10.9" height="8.2"/><rect x="130.6" y="78.1" width="7.5" height="11.8"/><rect x="141.1" y="78.1" width="12.5" height="10.0"/><rect x="154.3" y="78.1" width="8.8" height="8.4"/><rect x="165.8" y="78.1" width="7.9" height="9.8"/><rect x="196.0" y="78.1" width="10.6" height="9.5"/><rect x="225.4" y="78.1" width="13.1" height="12.9"/><rect x="239.8" y="78.1" width="12.1" height="11.4"/><rect x="267.7" y="78.1" width="12.7" height="10.2"/><rect x="282.2" y="78.1" width="12.4" height="10.0"/><rect x="322.4" y="78.1" width="10.6" height="11.5"/><rect x="334.3" y="78.1" width="10.9" height="10.3"/><rect x="347.9" y="78.1" width="10.6" height="11.0"/><rect x="359.7" y="78.1" width="15.0" height="11.8"/><rect x="378.9" y="78.1" width="13.1" height="9.7"/><rect x="404.4" y="78.1" width="11.7" height="12.9"/><rect x="419.0" y="78.1" width="14.7" height="9.3"/><rect x="438.4" y="78.1" width="11.5" height="12.7"/><rect x="58.1" y="93.7" width="12.6" height="11.6"/><rect x="73.3" y="93.7" width="10.1" height="9.7"/><rect x="84.7" y="93.7" width="14.9" height="12.6"/><rect x="104.5" y="93.7" width="9.1" height="11.8"/><rect x="116.2" y="93.7" width="9.8" height="8.2"/><rect x="127.7" y="93.7" width="14.3" height="11.2"/><rect x="189.6" y="93.7" width="14.2" height="9.4"/><rect x="208.3" y="93.7" width="15.0" height="11.5"/><rect x="225.1" y="93.7" width="10.9" height="8.0"/><rect x="254.8" y="93.7" width="13.8" height="9.1"/><rect x="272.1" y="93.7" width="8.2" height="8.1"/><rect x="281.1" y="93.7" width="11.8" height="8.5"/><rect x="311.8" y="93.7" width="10.3" height="11.7"/><rect x="331.8" y="93.7" width="7.3" height="9.5"/><rect x="373.7" y="93.7" width="10.9" height="9.0"/><rect x="386.7" y="93.7" width="13.7" height="12.5"/><rect x="402.5" y="93.7" width="8.9" height="10.8"/><rect x="416.4" y="93.7" width="12.2" height="9.8"/><rect x="65.0" y="109.1" width="6.0" height="9.1"/><rect x="74.7" y="109.1" width="7.6" height="10.6"/><rect x="86.0" y="109.1" width="12.2" height="11.8"/><rect x="99.3" y="109.1" width="12.5" height="10.2"/><rect x="115.6" y="109.1" width="13.0" height="11.6"/><rect x="157.6" y="109.1" width="8.6" height="8.5"/><rect x="168.9" y="109.1" width="10.3" height="9.8"/><rect x="182.3" y="109.1" width="7.4" height="10.4"/><rect x="192.5" y="109.1" width="10.5" height="10.1"/><rect x="217.3" y="109.1" width="9.8" height="11.4"/><rect x="231.1" y="109.1" width="14.0" height="9.2"/><rect x="247.8" y="109.1" width="10.1" height="11.2"/><rect x="259.6" y="109.1" width="8.2" height="10.2"/><rect x="269.7" y="109.1" width="14.5" height="11.1"/><rect x="285.2" y="109.1" width="11.7" height="11.0"/><rect x="297.6" y="109.1" width="11.4" height="12.0"/><rect x="312.5" y="109.1" width="9.2" height="9.9"/><rect x="325.6" y="109.1" width="12.7" height="10.7"/><rect x="340.2" y="109.1" width="14.8" height="8.2"/><rect x="356.8" y="109.1" width="13.2" height="12.8"/><rect x="373.8" y="109.1" width="7.9" height="12.9"/><rect x="386.1" y="109.1" width="6.2" height="9.7"/><rect x="393.6" y="109.1" width="6.1" height="9.6"/><rect x="78.9" y="123.6" width="7.2" height="11.1"/><rect x="101.2" y="123.6" width="9.2" height="9.9"/><rect x="123.8" y="123.6" width="11.9" height="10.5"/><rect x="138.2" y="123.6" width="7.5" height="8.6"/><rect x="147.7" y="123.6" width="8.2" height="9.0"/><rect x="159.6" y="123.6" width="11.5" height="8.1"/><rect x="173.4" y="123.6" width="7.6" height="11.7"/><rect x="196.5" y="123.6" width="9.1" height="9.8"/><rect x="218.4" y="123.6" width="7.8" height="11.3"/><rect x="238.9" y="123.6" width="12.3" height="12.9"/><rect x="253.6" y="123.6" width="14.4" height="10.9"/><rect x="272.5" y="123.6" width="6.5" height="8.5"/><rect x="280.8" y="123.6" width="14.7" height="11.6"/><rect x="298.7" y="123.6" width="10.0" height="10.4"/><rect x="313.3" y="123.6" width="12.7" height="8.3"/><rect x="330.8" y="123.6" width="9.5" height="8.6"/><rect x="343.2" y="123.6" width="9.3" height="10.7"/><rect x="355.0" y="123.6" width="11.5" height="11.0"/><rect x="369.3" y="123.6" width="7.9" height="9.4"/><rect x="75.7" y="139.6" width="12.4" height="10.0"/><rect x="89.9" y="139.6" width="11.2" height="11.6"/><rect x="104.1" y="139.6" width="13.7" height="11.1"/><rect x="129.8" y="139.6" width="10.2" height="11.3"/><rect x="142.4" y="139.6" width="8.2" height="10.6"/><rect x="170.6" y="139.6" width="9.5" height="8.8"/><rect x="182.2" y="139.6" width="11.5" height="9.4"/><rect x="196.3" y="139.6" width="7.2" height="9.1"/><rect x="207.2" y="139.6" width="9.1" height="11.4"/><rect x="217.4" y="139.6" width="13.2" height="11.2"/><rect x="234.4" y="139.6" width="10.6" height="8.3"/><rect x="264.5" y="139.6" width="11.4" height="12.4"/><rect x="290.1" y="139.6" width="14.3" height="10.0"/><rect x="323.7" y="139.6" width="12.1" height="12.6"/><rect x="86.7" y="154.5" width="8.0" height="8.8"/><rect x="97.0" y="154.5" width="15.0" height="11.2"/><rect x="116.9" y="154.5" width="7.9" height="10.2"/><rect x="146.7" y="154.5" width="13.4" height="9.5"/><rect x="163.8" y="154.5" width="14.9" height="12.2"/><rect x="196.9" y="154.5" width="13.8" height="8.5"/><rect x="214.1" y="154.5" width="13.0" height="12.3"/><rect x="228.5" y="154.5" width="6.0" height="12.9"/><rect x="237.7" y="154.5" width="13.8" height="8.9"/><rect x="255.0" y="154.5" width="9.1" height="11.7"/><rect x="282.3" y="154.5" width="8.5" height="10.8"/><rect x="292.4" y="154.5" width="7.4" height="10.1"/><rect x="304.1" y="154.5" width="10.9" height="10.5"/><rect x="315.7" y="154.5" width="8.8" height="11.8"/><rect x="105.1" y="169.7" width="9.3" height="12.1"/><rect x="115.5" y="169.7" width="6.3" height="10.4"/><rect x="135.0" y="169.7" width="12.1" height="9.9"/><rect x="147.9" y="169.7" width="11.3" height="11.4"/><rect x="170.4" y="169.7" width="11.5" height="8.9"/><rect x="182.6" y="169.7" width="14.9" height="9.3"/><rect x="198.7" y="169.7" width="10.0" height="12.9"/><rect x="209.2" y="169.7" width="9.7" height="11.0"/><rect x="277.7" y="169.7" width="14.9" height="12.4"/><rect x="294.4" y="169.7" width="6.8" height="10.6"/><rect x="303.7" y="169.7" width="9.2" height="10.9"/><rect x="313.8" y="169.7" width="6.0" height="12.5"/><rect x="124.4" y="186.3" width="9.7" height="9.0"/><rect x="148.3" y="186.3" width="7.2" height="9.2"/><rect x="157.6" y="186.3" width="6.1" height="8.9"/><rect x="166.8" y="186.3" width="8.7" height="12.2"/><rect x="179.1" y="186.3" width="9.3" height="12.0"/><rect x="236.5" y="186.3" width="13.5" height="8.8"/><rect x="251.7" y="186.3" width="9.5" height="9.4"/><rect x="264.1" y="186.3" width="13.9" height="9.8"/><rect x="282.1" y="186.3" width="8.3" height="8.5"/><rect x="150.2" y="201.9" width="8.9" height="8.5"/><rect x="173.3" y="201.9" width="14.7" height="11.1"/><rect x="190.8" y="201.9" width="12.5" height="13.0"/><rect x="204.4" y="201.9" width="13.5" height="11.6"/><rect x="220.5" y="201.9" width="14.6" height="10.2"/><rect x="236.1" y="201.9" width="14.8" height="9.9"/><rect x="252.8" y="201.9" width="14.5" height="10.1"/><rect x="176.1" y="216.8" width="14.1" height="8.9"/><rect x="192.6" y="216.8" width="11.9" height="9.3"/><rect x="223.4" y="216.8" width="14.2" height="10.0"/><rect x="238.4" y="216.8" width="12.0" height="9.6"/><rect x="145.4" y="231.6" width="8.0" height="8.8"/><rect x="154.7" y="231.6" width="14.5" height="12.6"/><rect x="210.1" y="231.6" width="12.8" height="11.4"/><rect x="173.3" y="247.6" width="12.8" height="10.1"/><rect x="186.9" y="247.6" width="7.4" height="11.1"/><rect x="165.4" y="264.3" width="11.2" height="9.1"/><rect x="178.9" y="264.3" width="12.0" height="11.9"/></g><g fill="#efeeea"><polygon points="95,150 150,190 128,222 72,182"/><polygon points="150,175 200,212 180,240 130,203"/><polygon points="300,40 345,72 320,105 280,78"/><polygon points="250,70 285,95 265,120 232,98"/><polygon points="345,70 390,100 370,125 330,98"/><polygon points="62,120 100,146 88,165 50,140"/></g><g fill="#e4e3de" stroke="#d2d1cb" stroke-width="0.6"><polygon points="301,113 374,163 299,267 224,210"/><polygon points="214,220 292,275 275,300 190,300 187,250"/><polygon points="339,240 361,255 330,300 300,300"/></g><path d="M384 176 L436 190 L436 295 L355 295 L352 262 C 345 250 340 242 338 232 Z" fill="#e2efdd"/><path d="M371 268 C 392 262 420 275 436 290 L436 295 L365 295 Z" fill="#d9e8c8"/><circle cx="402" cy="227" r="31" fill="none" stroke="#b8b4c8" stroke-width="0.6"/><circle cx="378" cy="193" r="6" fill="none" stroke="#cfdccc" stroke-width="0.8"/><path d="M335 0 L377 2 L370 14 L354 15 Z" fill="#e4eedb"/><path d="M392 12 L420 0 L436 0 L436 12 Z" fill="#e4eedb"/><g fill="#e7e1f1" stroke="#c9c1d8" stroke-width="0.6"><path d="M357 43 C 360 37 372 35 382 33 L424 31 L422 37 C 405 41 385 46 370 52 Z"/><polygon points="386,84 416,106 388,145 356,123"/><polygon points="408,143 426,118 436,126 436,165"/><polygon points="403,71 434,50 436,93 425,87"/></g><polygon points="253,32 271,43 262,57 244,47" fill="#dce9d0"/><g stroke="#fdfdfc" fill="none" stroke-linecap="butt"><path d="M33,0 L255,160" stroke-width="4.2"/><path d="M-5,8 L175,138" stroke-width="4.2"/><path d="M-5,46 L330,292" stroke-width="4.2"/><path d="M25,113 L300,311" stroke-width="4.2"/><path d="M-5,168 L175,297" stroke-width="4.2"/><path d="M-5,204 L125,297" stroke-width="4.2"/><path d="M74,0 L173,64" stroke-width="4.2"/><path d="M128,0 L204,55" stroke-width="4.2"/><path d="M217,0 L436,158" stroke-width="4.2"/><path d="M277,0 L436,101" stroke-width="4.2"/><path d="M13,135 L116,0" stroke-width="4.2"/><path d="M-5,253 L47,176" stroke-width="4.2"/><path d="M126,65 L177,0" stroke-width="4.2"/><path d="M243,0 L97,192" stroke-width="4.2"/><path d="M62,197 L25,262" stroke-width="4.2"/><path d="M307,0 L157,207 L110,275" stroke-width="4.2"/><path d="M155,295 L342,43" stroke-width="4.2"/><path d="M359,119 L436,40" stroke-width="5"/><path d="M343,86 L362,60" stroke-width="4.2"/><path d="M258.6,22.3 L276,0" stroke-width="4.2"/><path d="M5,0 L12.4,24.8 L24.8,120 L27,135" stroke-width="3.5"/><path d="M150,150 L162,142 L174,150 L168,160" stroke-width="3"/><path d="M205,105 L212,98 L222,104" stroke-width="3"/></g><line x1="177" y1="0" x2="450" y2="191" stroke="#fdfdfc" stroke-width="10"/><line x1="280" y1="303" x2="450" y2="83" stroke="#fdfdfc" stroke-width="8"/><path d="M342 43 C 352 30 375 21 440 16" stroke="#fdfdfc" stroke-width="9" fill="none"/><line x1="-20" y1="119" x2="262" y2="313.5" stroke="#cdcdca" stroke-width="16"/><line x1="-20" y1="119" x2="262" y2="313.5" stroke="#d8d8d5" stroke-width="11"/><line x1="-20" y1="119" x2="262" y2="313.5" stroke="#dedddb" stroke-width="5"/><text x="66" y="22" font-size="10" fill="#707070" font-weight="normal" text-anchor="middle" dominant-baseline="central" transform="rotate(37 66 22)" stroke="#f6f6f2" stroke-width="2" paint-order="stroke">W Clay St</text><text x="190" y="115" font-size="10" fill="#707070" font-weight="normal" text-anchor="middle" dominant-baseline="central" transform="rotate(37 190 115)" stroke="#f6f6f2" stroke-width="2" paint-order="stroke">E Clay St</text><text x="51" y="88" font-size="10" fill="#707070" font-weight="normal" text-anchor="middle" dominant-baseline="central" transform="rotate(37 51 88)" stroke="#f6f6f2" stroke-width="2" paint-order="stroke">W Marshall St</text><text x="247" y="170" font-size="10" fill="#707070" font-weight="normal" text-anchor="middle" dominant-baseline="central" transform="rotate(-53 247 170)" stroke="#f6f6f2" stroke-width="2" paint-order="stroke">N 3rd St</text><text x="44" y="269" font-size="10" fill="#707070" font-weight="normal" text-anchor="middle" dominant-baseline="central" transform="rotate(-53 44 269)" stroke="#f6f6f2" stroke-width="2" paint-order="stroke">N 1st St</text><text x="94" y="287" font-size="10" fill="#707070" font-weight="normal" text-anchor="middle" dominant-baseline="central" transform="rotate(-53 94 287)" stroke="#f6f6f2" stroke-width="2" paint-order="stroke">St</text><text x="394" y="67" font-size="10" fill="#707070" font-weight="normal" text-anchor="middle" dominant-baseline="central" transform="rotate(-42 394 67)" stroke="#f6f6f2" stroke-width="2" paint-order="stroke">N 4th St</text><text x="403" y="25.5" font-size="10" fill="#707070" font-weight="normal" text-anchor="middle" dominant-baseline="central" transform="rotate(0 403 25.5)" stroke="#f6f6f2" stroke-width="2" paint-order="stroke">N 3rd St</text><text x="12" y="13" font-size="10" fill="#707070" font-weight="normal" text-anchor="middle" dominant-baseline="central" transform="rotate(82 12 13)" stroke="#f6f6f2" stroke-width="2" paint-order="stroke">ok Rd</text><text x="170" y="6" font-size="10" fill="#707070" font-weight="normal" text-anchor="middle" dominant-baseline="central" transform="rotate(-58 170 6)" stroke="#f6f6f2" stroke-width="2" paint-order="stroke">Sal</text><text x="294" y="58.8" font-size="10.4" fill="#5b7a4c" font-weight="normal" text-anchor="middle" dominant-baseline="central" transform="rotate(0 294 58.8)" stroke="#f6f6f2" stroke-width="2" paint-order="stroke">Maggie L.</text><text x="294" y="70.0" font-size="10.4" fill="#5b7a4c" font-weight="normal" text-anchor="middle" dominant-baseline="central" transform="rotate(0 294 70.0)" stroke="#f6f6f2" stroke-width="2" paint-order="stroke">Walker National</text><text x="294" y="81.19999999999999" font-size="10.4" fill="#5b7a4c" font-weight="normal" text-anchor="middle" dominant-baseline="central" transform="rotate(0 294 81.19999999999999)" stroke="#f6f6f2" stroke-width="2" paint-order="stroke">Historic Site</text><text x="160" y="214.0" font-size="10.4" fill="#5a5a5a" font-weight="normal" text-anchor="middle" dominant-baseline="central" transform="rotate(0 160 214.0)" stroke="#f6f6f2" stroke-width="2" paint-order="stroke">New York</text><text x="160" y="225.5" font-size="10.4" fill="#5a5a5a" font-weight="normal" text-anchor="middle" dominant-baseline="central" transform="rotate(0 160 225.5)" stroke="#f6f6f2" stroke-width="2" paint-order="stroke">Fashion Mens</text><text x="160" y="237.0" font-size="10.4" fill="#5a5a5a" font-weight="normal" text-anchor="middle" dominant-baseline="central" transform="rotate(0 160 237.0)" stroke="#f6f6f2" stroke-width="2" paint-order="stroke">&amp; Boys</text><text x="402" y="220.5" font-size="10.2" fill="#6a6a6a" font-weight="normal" text-anchor="middle" dominant-baseline="central" transform="rotate(0 402 220.5)" stroke="#f6f6f2" stroke-width="2" paint-order="stroke">Richmond</text><text x="402" y="232.0" font-size="10.2" fill="#6a6a6a" font-weight="normal" text-anchor="middle" dominant-baseline="central" transform="rotate(0 402 232.0)" stroke="#f6f6f2" stroke-width="2" paint-order="stroke">Coliseum</text><text x="395" y="288" font-size="10.2" fill="#5c9c3e" font-weight="normal" text-anchor="middle" dominant-baseline="central" transform="rotate(0 395 288)" stroke="#f6f6f2" stroke-width="2" paint-order="stroke">Festival Park</text><path d="M66 186 C 70 184 78 184 82 186 L83 190 L82 197 L66 197 L65 190 Z" fill="#fff" stroke="#666" stroke-width="0.7"/><text x="74" y="195" font-size="8" fill="#333" text-anchor="middle">250</text><rect x="393" y="164" width="16" height="13" fill="#fff" stroke="#777" stroke-width="0.7"/><text x="401" y="174" font-size="8.5" fill="#333" text-anchor="middle">33</text><circle cx="218" cy="147" r="3.7" fill="#b3191c" stroke="#f3d0d0" stroke-width="0.5"/><rect x="15" y="17.5" width="33" height="62" rx="5" fill="rgba(250,250,248,0.6)"/><line x1="15" y1="48.5" x2="48" y2="48.5" stroke="#d0d0d0" stroke-width="0.8"/><path d="M27 32.5 H37 M32 27.5 V37.5" stroke="#444" stroke-width="1"/><path d="M27 64 H37" stroke="#777" stroke-width="1"/></g><rect x="0.5" y="0.5" width="435" height="294" rx="8" fill="none" stroke="#c8c8c8" stroke-width="1"/></svg>
<svg class="b" style="left:1260px;top:584px;font-family:"Liberation Sans",sans-serif" width="475" height="295" viewBox="0 0 475 295"><rect x="0.5" y="0.5" width="474" height="294" rx="8" fill="#fff" stroke="#c8c8c8" stroke-width="1"/><line x1="194.0" y1="42.7" x2="237.6" y2="147.0" stroke="#f0a01e" stroke-width="1.6"/><line x1="306.5" y1="57.3" x2="237.6" y2="147.0" stroke="#f0a01e" stroke-width="1.6"/><line x1="125.0" y1="131.7" x2="237.6" y2="147.0" stroke="#f0a01e" stroke-width="1.6"/><line x1="349.6" y1="161.5" x2="237.6" y2="147.0" stroke="#f0a01e" stroke-width="1.6"/><line x1="168.7" y1="236.0" x2="237.6" y2="147.0" stroke="#f0a01e" stroke-width="1.6"/><line x1="281.0" y1="252.0" x2="237.6" y2="147.0" stroke="#f0a01e" stroke-width="1.6"/><polygon points="216.3,100.6 206.7,90.6 215.9,86.7" fill="#f0a01e"/><polygon points="268.4,105.2 272.4,91.9 280.3,98.0" fill="#f0a01e"/><polygon points="187.3,140.2 173.8,143.4 175.1,133.5" fill="#f0a01e"/><polygon points="287.9,154.9 301.4,151.6 300.1,161.6" fill="#f0a01e"/><polygon points="204.9,186.5 200.9,199.8 193.0,193.7" fill="#f0a01e"/><polygon points="257.1,193.0 266.7,203.1 257.5,206.9" fill="#f0a01e"/><circle cx="194.0" cy="42.7" r="4.3" fill="#a0521f" stroke="#d0c0b0" stroke-width="0.9"/><circle cx="306.5" cy="57.3" r="4.3" fill="#a0521f" stroke="#d0c0b0" stroke-width="0.9"/><circle cx="125.0" cy="131.7" r="4.3" fill="#a0521f" stroke="#d0c0b0" stroke-width="0.9"/><circle cx="349.6" cy="161.5" r="4.3" fill="#a0521f" stroke="#d0c0b0" stroke-width="0.9"/><circle cx="168.7" cy="236.0" r="4.3" fill="#a0521f" stroke="#d0c0b0" stroke-width="0.9"/><circle cx="281.0" cy="252.0" r="4.3" fill="#a0521f" stroke="#d0c0b0" stroke-width="0.9"/><circle cx="237.6" cy="147.0" r="4" fill="#b8141c" stroke="#9a9a9a" stroke-width="1"/><text x="194.0" y="27.5" font-size="12.4" fill="#6b6b6b" text-anchor="middle" dominant-baseline="central">Beau</text><text x="306.5" y="42.4" font-size="12.4" fill="#6b6b6b" text-anchor="middle" dominant-baseline="central">Lauren</text><text x="125.0" y="116.8" font-size="12.4" fill="#6b6b6b" text-anchor="middle" dominant-baseline="central">Jane</text><text x="349.6" y="144.0" font-size="12.4" fill="#6b6b6b" text-anchor="middle" dominant-baseline="central">Larry</text><text x="168.7" y="221.0" font-size="12.4" fill="#6b6b6b" text-anchor="middle" dominant-baseline="central">Joe</text><text x="281.0" y="237.0" font-size="12.4" fill="#6b6b6b" text-anchor="middle" dominant-baseline="central">Etta</text><text x="237.6" y="129.5" font-size="12.4" fill="#6b6b6b" text-anchor="middle" dominant-baseline="central">New Metal Office Suppliers</text><text x="226.4" y="90.0" font-size="12.4" fill="#6b6b6b" text-anchor="middle" dominant-baseline="central" transform="rotate(67.3 226.4 90.0)">WorksFor</text><text x="295.3" y="142.2" font-size="12.4" fill="#6b6b6b" text-anchor="middle" dominant-baseline="central" transform="rotate(7.4 295.3 142.2)">WorksFor</text><text x="193.6" y="183.8" font-size="12.4" fill="#6b6b6b" text-anchor="middle" dominant-baseline="central" transform="rotate(-52 193.6 183.8)">WorksFor</text><text x="269.2" y="194.3" font-size="12.4" fill="#6b6b6b" text-anchor="middle" dominant-baseline="central" transform="rotate(67.5 269.2 194.3)">WorksFor</text><rect x="15.5" y="16" width="32.5" height="64" rx="4" fill="#f9f9f9" style="filter:drop-shadow(0 2px 5px rgba(0,0,0,0.12))"/><line x1="15.5" y1="48.5" x2="48" y2="48.5" stroke="#d8d8d8" stroke-width="1"/><path d="M27 32.5 H37 M32 27.5 V37.5" stroke="#555" stroke-width="1"/><path d="M27 64.5 H37" stroke="#555" stroke-width="1"/></svg>
<div class="b" style="left:1668px;top:86px;width:155px;height:96px;background:#fff;border-radius:4px;box-shadow:0 2px 10px rgba(0,0,0,0.13)"></div>
<svg class="b" style="left:1682.3px;top:100.5px;" width="20" height="18" viewBox="0 0 20 18"><g fill="none" stroke="#666" stroke-width="1.1"><path d="M9.7 15.6 H2.3 V2.3 H17.6 V7.7"/><path d="M11.1 12.5 H17.9 M14.5 9.1 V15.9"/></g></svg>
<div class="t " style="left:1712.60px;top:102.03px;font-size:14.25px;line-height:14.25px;color:#6a6a6a;">Add Record To</div>
<svg class="b" style="left:1683px;top:151px;" width="16" height="14" viewBox="0 0 16 14"><path d="M3 3 L7 7 L3 11 M9 3 L13 7 L9 11" fill="none" stroke="#6b6b6b" stroke-width="1.1"/></svg>
<div class="t " style="left:1712.60px;top:150.43px;font-size:14.25px;line-height:14.25px;color:#6a6a6a;">Col</div>
<div class="badge" style="left:229px;top:235px">1</div>
<div class="badge" style="left:493px;top:72.5px">2</div>
<div class="badge" style="left:1086px;top:88px">3</div>
<div class="badge" style="left:1730px;top:144px">4</div>
<div class="badge" style="left:1086px;top:913px">5</div>
</body></html>
